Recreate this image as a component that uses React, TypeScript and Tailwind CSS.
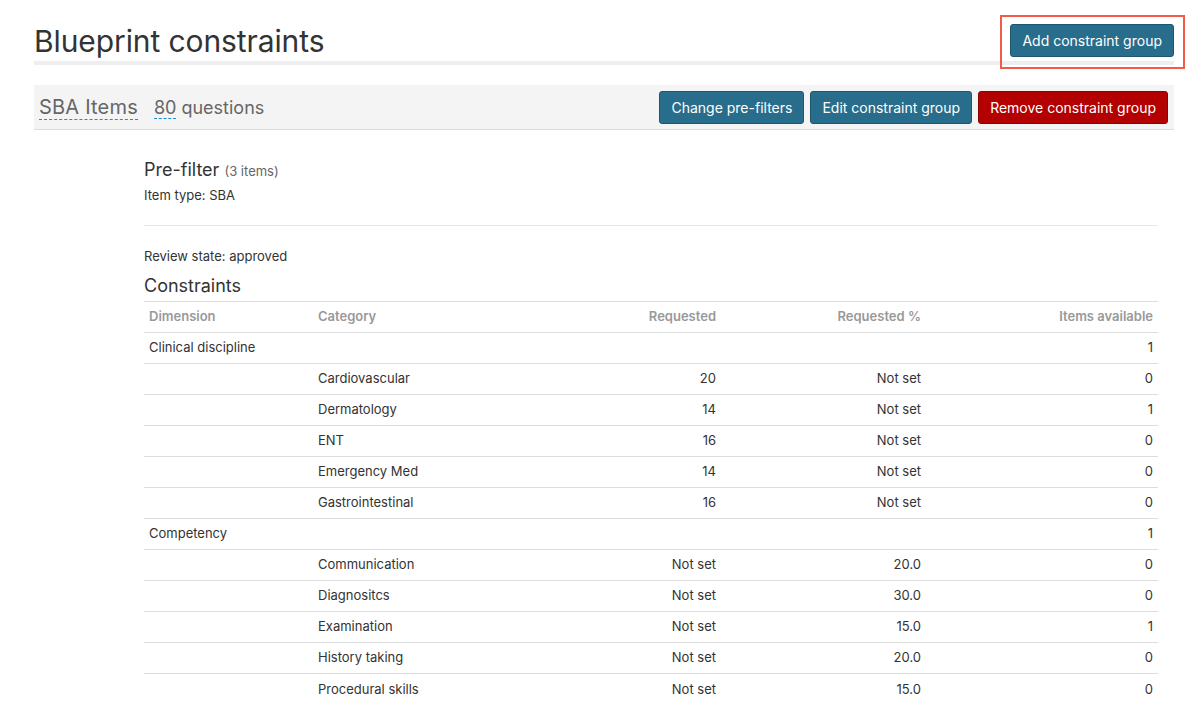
import React from 'react';

type Row = {
  dimension?: string;
  category?: string;
  requested?: string;
  percent?: string;
  available: string;
};

const rows: Row[] = [
  { dimension: 'Clinical discipline', available: '1' },
  { category: 'Cardiovascular', requested: '20', percent: 'Not set', available: '0' },
  { category: 'Dermatology', requested: '14', percent: 'Not set', available: '1' },
  { category: 'ENT', requested: '16', percent: 'Not set', available: '0' },
  { category: 'Emergency Med', requested: '14', percent: 'Not set', available: '0' },
  { category: 'Gastrointestinal', requested: '16', percent: 'Not set', available: '0' },
  { dimension: 'Competency', available: '1' },
  { category: 'Communication', requested: 'Not set', percent: '20.0', available: '0' },
  { category: 'Diagnositcs', requested: 'Not set', percent: '30.0', available: '0' },
  { category: 'Examination', requested: 'Not set', percent: '15.0', available: '1' },
  { category: 'History taking', requested: 'Not set', percent: '20.0', available: '0' },
  { category: 'Procedural skills', requested: 'Not set', percent: '15.0', available: '0' },
];

function ActionButton({ children, danger }: { children: React.ReactNode; danger?: boolean }) {
  return (
    <button
      className={
        danger
          ? 'h-[33px] px-[11px] rounded-[3px] border border-[#8f0000] bg-[#b30000] text-white text-[14px]'
          : 'h-[33px] px-[11px] rounded-[3px] border border-[#1d5670] bg-[#286d8b] text-white text-[14px]'
      }
    >
      {children}
    </button>
  );
}

export default function App() {
  return (
    <div className="min-h-screen bg-white text-[#333] font-['Inter','Noto_Sans',sans-serif] pl-[34px] pr-[28px] pt-[24px]">
      {/* Page header */}
      <div className="flex items-center justify-between border-b-[4px] border-[#eeeeee] pb-[4px]">
        <h1 className="text-[30px] leading-[30px] text-[#333] tracking-[-0.1px]">Blueprint constraints</h1>
        <div className="relative">
          <ActionButton>Add constraint group</ActionButton>
          <div className="absolute -left-[10px] -right-[11px] -top-[9px] -bottom-[12px] border-2 border-[#f25a4a] pointer-events-none" />
        </div>
      </div>

      {/* Constraint group bar */}
      <div className="mt-[20px] flex items-center justify-between h-[45px] bg-[#f4f4f4] border-b border-[#dddddd] pl-[5px] pr-[6px]">
        <div className="flex items-baseline gap-[16px] text-[#666]">
          <span className="text-[20px] border-b border-dashed border-[#1a8fd0] leading-[24px] tracking-[0.2px]">SBA Items</span>
          <span className="text-[18px]">
            <span className="border-b border-dashed border-[#1a8fd0]">80</span> questions
          </span>
        </div>
        <div className="flex gap-[6px]">
          <ActionButton>Change pre-filters</ActionButton>
          <ActionButton>Edit constraint group</ActionButton>
          <ActionButton danger>Remove constraint group</ActionButton>
        </div>
      </div>

      {/* Body */}
      <div className="ml-[110px] mr-[16px] pt-[29px]">
        <div className="text-[18px] leading-[22px]">
          Pre-filter <span className="text-[13px] text-[#666]">(3 items)</span>
        </div>
        <div className="text-[13px] leading-[18px] mt-[4px]">Item type: SBA</div>
        <div className="border-t border-[#e8e8e8] mt-[21px]" />
        <div className="text-[13px] leading-[18px] mt-[21px]">Review state: approved</div>
        <div className="text-[18px] mt-[10px] leading-[22px]">Constraints</div>

        <table className="w-full mt-[4px] text-[13px] border-collapse">
          <thead>
            <tr className="border-t border-b border-[#dddddd] h-[31px] text-[#999]">
              <th className="w-[169px] text-left px-[5px] font-semibold">Dimension</th>
              <th className="w-[240px] text-left px-[5px] font-semibold">Category</th>
              <th className="w-[168px] text-right px-[5px] font-semibold">Requested</th>
              <th className="w-[205px] text-right px-[5px] font-semibold">Requested %</th>
              <th className="text-right px-[5px] font-semibold">Items available</th>
            </tr>
          </thead>
          <tbody>
            {rows.map((r, i) => (
              <tr
                key={i}
                className={i < rows.length - 1 ? 'h-[31px] border-b border-[#dddddd]' : 'h-[31px]'}
              >
                <td className="px-[5px]">{r.dimension}</td>
                <td className="px-[5px]">{r.category}</td>
                <td className="px-[5px] text-right">{r.requested}</td>
                <td className="px-[5px] text-right">{r.percent}</td>
                <td className="px-[5px] text-right">{r.available}</td>
              </tr>
            ))}
          </tbody>
        </table>
      </div>
    </div>
  );
}
